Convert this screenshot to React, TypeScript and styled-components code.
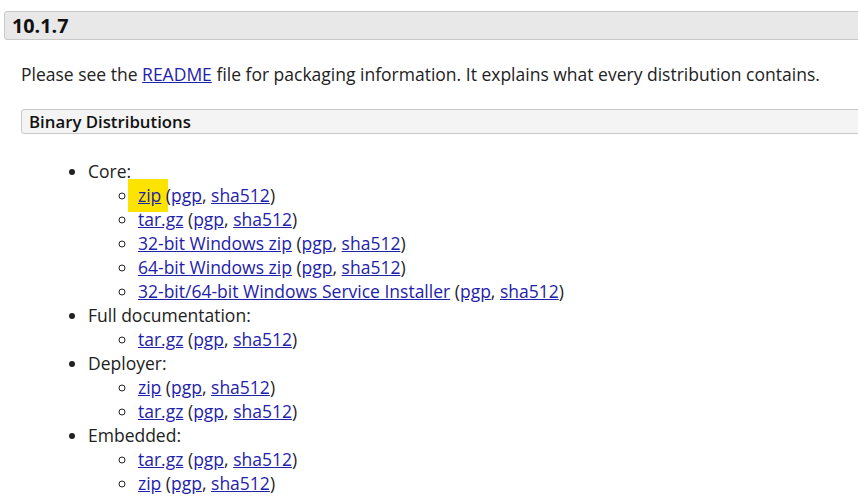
import React from 'react';
import styled, { createGlobalStyle } from 'styled-components';

const GlobalStyle = createGlobalStyle`
  html, body {
    margin: 0;
    background: #fff;
    overflow: hidden;
  }
  body {
    font-family: "Open Sans", "Noto Sans", sans-serif;
    font-size: 17.5px;
    color: #222;
  }
`;

const Page = styled.div`
  width: 900px;
  padding: 11px 0 0 4px;
`;

const Release = styled.h3`
  margin: 0;
  height: 27px;
  padding: 0 7px;
  background: #e8e8e8;
  border: 1px solid #c8c8c8;
  border-radius: 3px;
  font-size: 19.8px;
  font-weight: 700;
  line-height: 28px;
  color: #111;
`;

const Section = styled.div`
  padding-left: 17px;
`;

const Para = styled.p`
  margin: 22px 0 0;
  line-height: 24px;
`;

const SubHead = styled.h4`
  margin: 23px 0 0;
  height: 23px;
  padding: 0 7px;
  background: #f4f4f4;
  border: 1px solid #c8c8c8;
  border-radius: 3px;
  font-size: 16.8px;
  font-weight: 600;
  line-height: 24px;
  color: #111;
`;

const List = styled.ul<{ $nested?: boolean }>`
  margin: ${(p) => (p.$nested ? '0' : '25px 0 0')};
  padding-left: ${(p) => (p.$nested ? '50px' : '67px')};
  list-style-type: ${(p) => (p.$nested ? 'circle' : 'disc')};
  line-height: 24px;
`;

const Link = styled.a`
  color: #1e22aa;
  text-decoration: underline;
`;

const Marked = styled.span`
  margin: 0 -7px 0 -10px;
  padding: 4px 7px 5px 10px;
  background: #fde400;
`;

type Item = { label: string; marked?: boolean };

const groups: { name: string; items: Item[] }[] = [
  {
    name: 'Core:',
    items: [
      { label: 'zip', marked: true },
      { label: 'tar.gz' },
      { label: '32-bit Windows zip' },
      { label: '64-bit Windows zip' },
      { label: '32-bit/64-bit Windows Service Installer' },
    ],
  },
  { name: 'Full documentation:', items: [{ label: 'tar.gz' }] },
  { name: 'Deployer:', items: [{ label: 'zip' }, { label: 'tar.gz' }] },
  { name: 'Embedded:', items: [{ label: 'tar.gz' }, { label: 'zip' }] },
];

function Download({ item }: { item: Item }) {
  const main = <Link href="#">{item.label}</Link>;
  return (
    <li>
      {item.marked ? <Marked>{main}</Marked> : main} (<Link href="#">pgp</Link>,{' '}
      <Link href="#">sha512</Link>)
    </li>
  );
}

export default function App() {
  return (
    <>
      <GlobalStyle />
      <Page>
        <Release>10.1.7</Release>
        <Section>
          <Para>
            Please see the <Link href="#">README</Link> file for packaging information. It explains
            what every distribution contains.
          </Para>
          <SubHead>Binary Distributions</SubHead>
          <List>
            {groups.map((g) => (
              <li key={g.name}>
                {g.name}
                <List $nested>
                  {g.items.map((it, i) => (
                    <Download key={i} item={it} />
                  ))}
                </List>
              </li>
            ))}
          </List>
        </Section>
      </Page>
    </>
  );
}
